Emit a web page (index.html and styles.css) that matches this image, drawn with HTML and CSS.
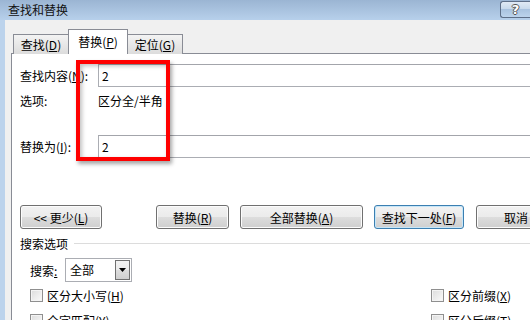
FILE: index.html
```html
<!DOCTYPE html>
<html lang="zh-CN">
<head>
  <meta charset="UTF-8">
  <title>查找和替换</title>
  <link rel="stylesheet" href="styles.css">
</head>
<body>
  <div class="titlebar">
    <span class="title">查找和替换</span>
    <span class="help">?</span>
  </div>
  <div class="window">
    <div class="frame"></div>
    <div class="client">
      <div class="tabs">
        <div class="tab">查找(<u>D</u>)</div>
        <div class="tab active">替换(<u>P</u>)</div>
        <div class="tab last">定位(<u>G</u>)</div>
      </div>
      <div class="panel">
        <div class="row first">
          <span class="label">查找内容(<u>N</u>):</span>
          <div class="field">2</div>
        </div>
        <div class="row options">
          <span class="label">选项:</span>
          <span>区分全/半角</span>
        </div>
        <div class="row second">
          <span class="label">替换为(<u>I</u>):</span>
          <div class="field">2</div>
        </div>

        <div class="buttons">
          <button class="btn less">&lt;&lt; 更少(<u>L</u>)</button>
          <button class="btn replace">替换(<u>R</u>)</button>
          <button class="btn all">全部替换(<u>A</u>)</button>
          <button class="btn next">查找下一处(<u>F</u>)</button>
          <button class="btn cancel">取消</button>
        </div>

        <div class="group">
          <span>搜索选项</span>
          <span class="rule"></span>
        </div>

        <div class="search">
          <span class="search-label">搜索<u>:</u></span>
          <div class="select">
            <span>全部</span>
            <span class="drop"><svg width="7" height="4" viewBox="0 0 7 4"><path d="M0 0h7L3.5 4z" fill="#000"/></svg></span>
          </div>
        </div>

        <div class="checks">
          <div class="check"><span class="box"></span><span>区分大小写(<u>H</u>)</span></div>
          <div class="check"><span class="box"></span><span>区分前缀(<u>X</u>)</span></div>
          <div class="check"><span class="box"></span><span>全字匹配(<u>Y</u>)</span></div>
          <div class="check"><span class="box"></span><span>区分后缀(<u>T</u>)</span></div>
        </div>
      </div>
    </div>
  </div>
  <div class="highlight"></div>
</body>
</html>
```

FILE: styles.css
```css
body {
  margin: 0;
  width: 530px;
  height: 320px;
  overflow: hidden;
  position: relative;
  font: 12px "Noto Sans CJK SC", "Microsoft YaHei", sans-serif;
  color: #000;
  background: #b9d1ea;
}
u {
  text-decoration: underline;
  text-underline-offset: 1px;
}
.titlebar {
  height: 20px;
  display: flex;
  align-items: center;
  justify-content: space-between;
  padding-left: 8px;
  background: linear-gradient(#9bb5d3, #b7d0eb);
}
.title {
  color: #111;
  margin-top: -1px;
}
.help {
  width: 29px;
  height: 15px;
  margin-top: -2px;
  border: 1px solid #5e6f88;
  border-right: none;
  border-radius: 3px 0 0 3px;
  background: linear-gradient(#e0eaf5 0, #c9daec 45%, #a9c3e0 50%, #bcd3ec 100%);
  color: #fff;
  font: bold 13px "DejaVu Sans", sans-serif;
  line-height: 15px;
  text-align: center;
  text-shadow: 1px 0 #555, -1px 0 #555, 0 1px #555, 0 -1px #555;
}
.window {
  display: flex;
  height: 300px;
}
.frame {
  width: 5px;
  background: #bcd3ec;
}
.client {
  flex: 1;
  background: #f0f0f0;
  padding: 8px 0 0 6px;
  overflow: hidden;
}
.tabs {
  display: flex;
  align-items: flex-end;
  height: 26px;
  padding-left: 2px;
}
.tab {
  width: 55px;
  height: 20px;
  box-sizing: border-box;
  border: 1px solid #898c95;
  border-bottom: none;
  border-right: none;
  background: linear-gradient(#f3f3f3, #dcdcdc);
  text-align: center;
  line-height: 20px;
}
.tab.active {
  width: 60px;
  height: 25px;
  background: #fff;
  border-right: 1px solid #898c95;
  line-height: 23px;
  position: relative;
  z-index: 1;
}
.tab.last {
  border-left: none;
  border-right: 1px solid #898c95;
}
.panel {
  margin-top: -1px;
  height: 280px;
  border-top: 1px solid #898c95;
  border-left: 1px solid #898c95;
  background: #fff;
  padding-left: 8px;
}
.row {
  display: flex;
  align-items: center;
}
.row.first {
  margin-top: 10px;
}
.row.options {
  margin-top: 4px;
  height: 18px;
}
.row.second {
  margin-top: 26px;
}
.label {
  width: 78px;
  flex: none;
}
.field {
  flex: 1;
  height: 23px;
  box-sizing: border-box;
  margin-right: -10px;
  border: 1px solid #abadb3;
  border-top-color: #a3a5ab;
  padding-left: 3px;
  line-height: 21px;
}
.buttons {
  display: flex;
  margin-top: 47px;
  gap: 12px;
}
.btn {
  flex: none;
  height: 24px;
  box-sizing: border-box;
  padding: 0;
  font: inherit;
  color: #000;
  border: 1px solid #707070;
  border-radius: 3px;
  background: linear-gradient(#f2f2f2 0, #ebebeb 50%, #dddddd 51%, #cfcfcf 100%);
  box-shadow: inset 0 0 0 1px #fcfcfc;
}
.btn.less { width: 82px; margin-right: 42px; }
.btn.replace { width: 73px; }
.btn.all { width: 123px; margin-left: -1px; }
.btn.next {
  width: 90px;
  margin-left: -1px;
  border-color: #3c7fb1;
  box-shadow: inset 0 0 0 1px #c6e6f8;
}
.btn.cancel {
  width: 80px;
  text-align: left;
  padding-left: 27px;
}
.group {
  display: flex;
  align-items: center;
  margin-top: 6px;
  height: 16px;
}
.rule {
  flex: 1;
  margin-left: 6px;
  border-top: 1px solid #dcdcdc;
}
.search {
  display: flex;
  align-items: center;
  margin-top: 7px;
  padding-left: 10px;
}
.search-label {
  width: 35px;
}
.select {
  width: 67px;
  height: 24px;
  box-sizing: border-box;
  border: 1px solid #abadb3;
  display: flex;
  justify-content: space-between;
  padding: 1px 1px 1px 4px;
  line-height: 20px;
}
.drop {
  width: 15px;
  box-sizing: border-box;
  border: 1px solid #707070;
  background: linear-gradient(#f2f2f2 0, #ebebeb 50%, #dddddd 51%, #cfcfcf 100%);
  display: flex;
  align-items: center;
  justify-content: center;
}
.checks {
  display: grid;
  grid-template-columns: 401px auto;
  padding-left: 10px;
  margin-top: 1px;
}
.check {
  display: flex;
  align-items: center;
  gap: 4px;
  height: 25px;
}
.box {
  width: 13px;
  height: 13px;
  box-sizing: border-box;
  border: 1px solid #8f8f8f;
  background: linear-gradient(135deg, #dcdcdc, #fbfbfb);
  box-shadow: inset 0 0 0 1px #f4f4f4;
}
.highlight {
  position: absolute;
  left: 76px;
  top: 60px;
  width: 94px;
  height: 101px;
  box-sizing: border-box;
  border: 4px solid #f00;
  box-shadow: 2px 3px 4px rgba(0, 0, 0, 0.35), inset 2px 2px 4px rgba(0, 0, 0, 0.25);
}
```
